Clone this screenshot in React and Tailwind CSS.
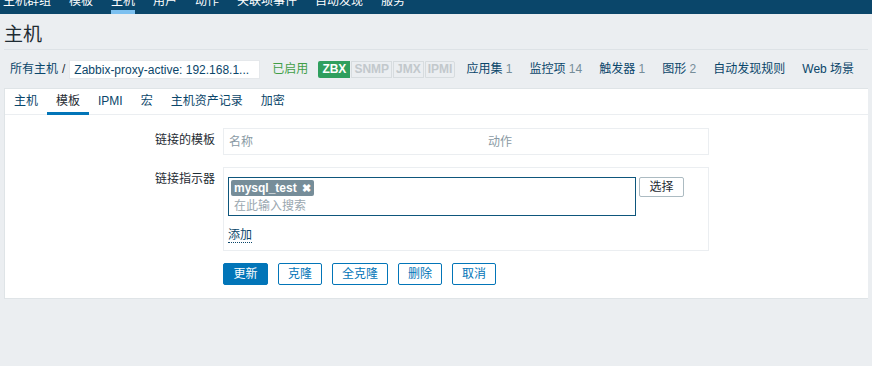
import React from "react";

const font = { fontFamily: '"Liberation Sans", Arial, "Noto Sans CJK SC", sans-serif' };

export default function App() {
  const nav = ["主机群组", "模板", "主机", "用户", "动作", "关联项事件", "自动发现", "服务"];
  const links = [
    { label: "应用集", n: "1" },
    { label: "监控项", n: "14" },
    { label: "触发器", n: "1" },
    { label: "图形", n: "2" },
    { label: "自动发现规则", n: "" },
    { label: "Web 场景", n: "" },
  ];
  const tabs = ["主机", "模板", "IPMI", "宏", "主机资产记录", "加密"];
  const buttons = ["克隆", "全克隆", "删除", "取消"];

  return (
    <div className="w-[872px] h-[366px] overflow-hidden bg-[#ebeef1] text-[12px] text-[#1f2c33]" style={font}>
      {/* top nav, scrolled so only the bottom shows */}
      <div className="h-[14px] bg-[#0a466a] overflow-hidden">
        <div className="flex gap-[18px] pl-[3px] -mt-[7px] text-[12px] text-white whitespace-nowrap">
          {nav.map((item) => (
            <div key={item} className="relative h-[21px] leading-[16px]">
              {item}
              {item === "主机" && <div className="absolute left-0 right-0 bottom-0 h-[4px] bg-[#7cc0f0]" />}
            </div>
          ))}
        </div>
      </div>

      <div className="px-[4px]">
        <div className="h-[36px] border-b border-[#dde2e6] text-[19px] leading-[42px]">主机</div>

        <div className="flex items-center h-[38px] pl-[6px] whitespace-nowrap">
          <span className="text-[#0a466a]">所有主机</span>
          <span className="ml-[4px] mr-[4px] text-[#1f2c33]">/</span>
          <span className="shrink-0 bg-white h-[19px] w-[191px] px-[4px] leading-[18px] text-[#0a466a] border border-[#e5e8eb]">
            Zabbix-proxy-active: 192.168.1...
          </span>
          <span className="ml-[12px] text-[#429e47]">已启用</span>
          <div className="flex ml-[10px] gap-[1px] font-bold text-[12px]">
            <span className="bg-[#2f9f5e] text-white px-[4px] h-[17px] leading-[17px] rounded-l-[2px]">ZBX</span>
            <span className="bg-[#ebeef1] border border-[#d7dcdf] text-[#c2c8cc] px-[2px] h-[17px] leading-[15px]">SNMP</span>
            <span className="bg-[#ebeef1] border border-[#d7dcdf] text-[#c2c8cc] px-[2px] h-[17px] leading-[15px]">JMX</span>
            <span className="bg-[#ebeef1] border border-[#d7dcdf] text-[#c2c8cc] px-[2px] h-[17px] leading-[15px] rounded-r-[2px]">IPMI</span>
          </div>
          <div className="flex gap-[17px] ml-[11px]">
            {links.map((l) => (
              <span key={l.label} className="text-[#0a466a]">
                {l.label}
                {l.n && <span className="text-[#768d99]"> {l.n}</span>}
              </span>
            ))}
          </div>
        </div>

        <div className="bg-white border border-[#dfe4e7] border-r-0 h-[211px]">
          <div className="flex h-[26px] border-b border-[#ebeef1]">
            {tabs.map((t) => (
              <div
                key={t}
                className={`px-[9px] leading-[24px] h-[26px] border-b-[3px] ${
                  t === "模板" ? "border-[#0275b8] text-[#1f2c33]" : "border-transparent text-[#0a466a]"
                }`}
              >
                {t}
              </div>
            ))}
          </div>

          <div className="pt-[13px]">
            <div className="flex">
              <div className="w-[210px] text-right pt-[3px]">链接的模板</div>
              <div className="ml-[8px] w-[486px] h-[27px] border border-[#ebeef1] flex items-center text-[#8a9aa4]">
                <span className="ml-[5px] w-[259px]">名称</span>
                <span>动作</span>
              </div>
            </div>

            <div className="flex mt-[12px]">
              <div className="w-[210px] text-right pt-[3px]">链接指示器</div>
              <div className="ml-[8px] w-[486px] h-[84px] border border-[#ebeef1] pl-[4px] pt-[9px]">
                <div className="flex items-start gap-[3px]">
                  <div className="w-[408px] h-[39px] border border-[#0e567c] px-[2px] pt-[1px]">
                    <span className="inline-flex items-center bg-[#768d99] text-white font-bold h-[16px] px-[3px] rounded-[2px] leading-[16px]">
                      mysql_test
                      <span className="ml-[5px] text-[11px]">✖</span>
                    </span>
                    <div className="text-[#9aa7af] pl-[3px] leading-[18px]">在此输入搜索</div>
                  </div>
                  <button className="h-[20px] w-[45px] border border-[#acbbc2] rounded-[2px] bg-white text-[#1f2c33] leading-[18px]">
                    选择
                  </button>
                </div>
                <div className="mt-[10px]">
                  <span className="text-[#0a466a] border-b border-dotted border-[#0a466a]">添加</span>
                </div>
              </div>
            </div>

            <div className="flex ml-[218px] mt-[12px] gap-[10px]">
              <button className="h-[22px] w-[45px] bg-[#0275b8] text-white rounded-[2px] border border-[#0275b8]">更新</button>
              {buttons.map((b) => (
                <button
                  key={b}
                  className="h-[22px] px-[9px] border border-[#0275b8] text-[#0275b8] bg-white rounded-[2px]"
                >
                  {b}
                </button>
              ))}
            </div>
          </div>
        </div>
      </div>
    </div>
  );
}
